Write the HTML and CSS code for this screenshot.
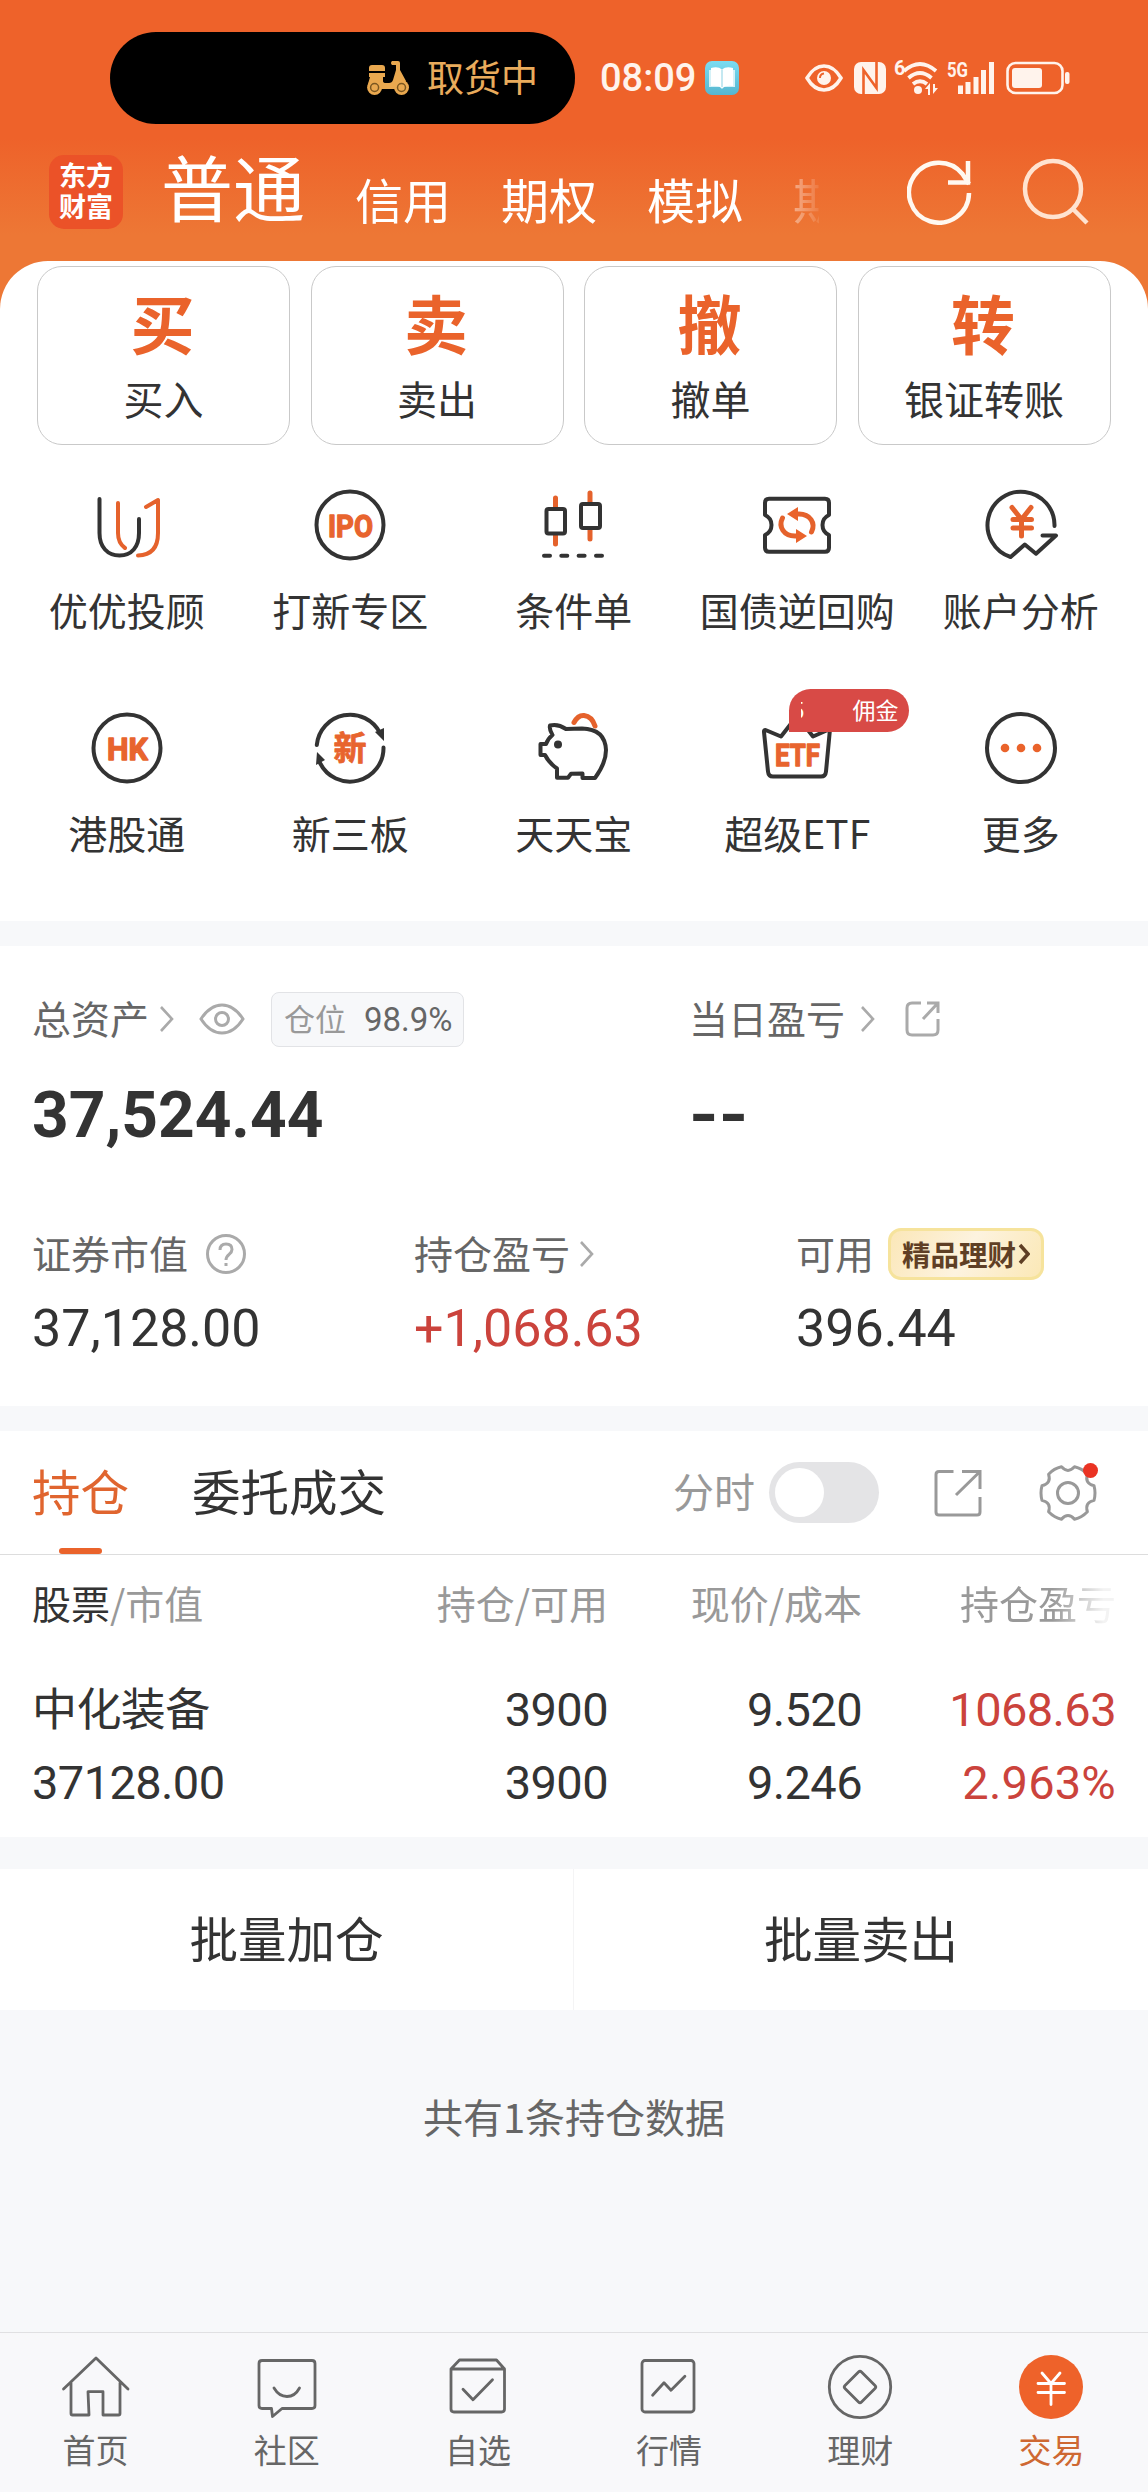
FILE: index.html
```html
<!DOCTYPE html>
<html lang="zh-CN">
<head>
<meta charset="utf-8">
<title>交易</title>
<link rel="stylesheet" href="styles.css">
</head>
<body>
<header class="top">
  <div class="status">
    <div class="pill">
      <svg width="44" height="36" viewBox="0 0 44 36"><g fill="#e9a84f"><path d="M3 11V8q0-3 3-3H16q3 0 3 3v3zM3 13H19V17H17v4q0 2 3 2h3q3 0 4-3l3-10V5H26q-1-1-1-2t1-2h6q2 0 2 2v7l6 11-4 8H8L2 24l2-7H3z"/><circle cx="8.600" cy="27.500" r="7.500"/><circle cx="35.500" cy="27.500" r="7.500"/></g><g fill="none" stroke="#7a5620" stroke-width="1.500"><circle cx="8.600" cy="27.500" r="4"/><circle cx="35.500" cy="27.500" r="4"/></g></svg>
      <span>取货中</span>
    </div>
    <span class="clock">08:09</span>
    <svg class="book" width="34" height="34" viewBox="0 0 34 34"><defs><linearGradient id="bk" x1="0" y1="0" x2="0" y2="1"><stop offset="0" stop-color="#7bdcf2"/><stop offset="1" stop-color="#55b6cf"/></linearGradient></defs><rect width="34" height="34" rx="7" fill="url(#bk)"/><path fill="#d5f1f7" d="M4 9h26v17H19l-2 2-2-2H4z"/><path fill="#fff" d="M6 7q7-2 11 1.500q4-3.500 11-1.500v18q-7-1-11 2-4-3-11-2z"/><path d="M17 8.500V26" stroke="#a5dcea" stroke-width="1.300"/></svg>
    <svg class="s-eye" width="38" height="28" viewBox="0 0 38 28"><path d="M2 14Q9 2 19 2t17 12Q29 26 19 26T2 14z" fill="none" stroke="#fff3ec" stroke-width="3.500"/><circle cx="19" cy="14" r="7" fill="#fff3ec"/><path d="M15 14q0-4 4-4.500" fill="none" stroke="#ee622a" stroke-width="2"/></svg>
    <svg class="s-nfc" width="32" height="34" viewBox="0 0 32 34"><rect y="1" width="32" height="32" rx="7" fill="#fff3ec"/><path d="M9.500 34V9L22.500 27V0" fill="none" stroke="#ee622a" stroke-width="2.600"/></svg>
    <svg class="s-wifi" width="44" height="36" viewBox="0 0 44 36"><text x="0" y="15" class="tiny">6</text><g fill="none" stroke="#fff3ec" stroke-width="3.800"><path d="M10 11Q26-3 42 11"/><path d="M14.500 18Q26 8 37.500 18"/><path d="M19 24q7-5.500 14 0"/></g><circle cx="24" cy="30" r="4" fill="#fff3ec"/><path fill="#fff3ec" d="M31 29l5-6v12h-2v-6zM44 28l-5 6V24h2v4z"/></svg>
    <svg class="s-cell" width="48" height="36" viewBox="0 0 48 36"><text x="0" y="17" class="tiny" textLength="21" lengthAdjust="spacingAndGlyphs">5G</text><path d="M13.500 34V25.500M21 34V22M29 34V17M36.500 34V10M44.500 34V2" stroke="#fff3ec" stroke-width="5"/></svg>
    <svg class="s-batt" width="64" height="34" viewBox="0 0 64 34"><rect x="1.500" y="2" width="55" height="30" rx="8" fill="none" stroke="#fff3ec" stroke-width="2.600"/><rect x="6" y="7" width="30" height="20" rx="3" fill="#fff3ec"/><rect x="59" y="11" width="4.500" height="12" rx="2" fill="#fff3ec"/></svg>
  </div>
  <div class="titlebar">
    <div class="logo"><span>东方</span><span>财富</span></div>
    <nav class="modes"><b>普通</b><span>信用</span><span>期权</span><span>模拟</span><span>期货</span></nav>
    <svg class="refresh" width="66" height="66" viewBox="0 0 66 66" fill="none" stroke="#fff8f0" stroke-width="4.500"><path d="M62 34A30 30 0 1 1 55.500 15L62 25"/><path d="M61 2V23.500H41"/></svg>
    <svg class="search" width="68" height="68" viewBox="0 0 68 68" fill="none" stroke="#ffe3d0" stroke-width="4.500"><circle cx="31" cy="31" r="28"/><path d="M51 51L65 65"/></svg>
  </div>
</header>

<main>
  <section class="panel">
    <div class="cards">
      <div class="card"><b>买</b><span>买入</span></div>
      <div class="card"><b>卖</b><span>卖出</span></div>
      <div class="card"><b>撤</b><span>撤单</span></div>
      <div class="card"><b>转</b><span>银证转账</span></div>
    </div>
    <div class="features">
      <div class="feature"><svg class="ico" viewBox="0 0 80 80"><path d="M12.500 14V48c0 14 8 22.500 20 22.500S52 62 52 48V34"/><path class="o" d="M31 18V48q0 10 7 15M59 22L71 15V48q0 22-20 22.500"/></svg><span>优优投顾</span></div>
      <div class="feature"><svg class="ico" viewBox="0 0 80 80"><circle cx="40" cy="40" r="33.500"/><text x="40.500" y="51.500" textLength="45" lengthAdjust="spacingAndGlyphs">IPO</text></svg><span>打新专区</span></div>
      <div class="feature"><svg class="ico" viewBox="0 0 80 80"><path class="o c" d="M21.500 13V22M21.500 50V59M56 8V17M56 44V54"/><rect x="12.500" y="24" width="18.500" height="24.500" rx="2"/><rect x="47" y="19" width="19" height="24" rx="2"/><path d="M10 70.700h6M27.300 70.700h6M44.600 70.700h6M62 70.700h6"/></svg><span>条件单</span></div>
      <div class="feature"><svg class="ico" viewBox="0 0 80 80"><path d="M12 13.700H68q4 0 4 4V30q-6.500 3-6.500 10T72 50V62.700q0 4-4 4H12q-4 0-4-4V50q6.500-3 6.500-10T8 30V17.700q0-4 4-4z"/><path class="o c" d="M39 29h3c11 0 17 9 12.500 18M41 51h-3C27 51 21 42 25.500 33"/><path class="f" d="M30 29l11-7v14zM50 51l-11-7v14z"/></svg><span>国债逆回购</span></div>
      <div class="feature"><svg class="ico" viewBox="0 0 80 80"><path d="M73.500 41A33.500 33.500 0 1 0 29.600 72L43.800 59.500 55 68.700 75 50.500H61.500"/><path class="o c" d="M31 22.500l9.500 12 9.500-12M32 34.500H50.500M32 43H50.500M40.500 34V51"/></svg><span>账户分析</span></div>
      <div class="feature"><svg class="ico" viewBox="0 0 80 80"><circle cx="40" cy="40" r="33.500"/><text x="40.500" y="51.500" textLength="41" lengthAdjust="spacingAndGlyphs">HK</text></svg><span>港股通</span></div>
      <div class="feature"><svg class="ico" viewBox="0 0 80 80"><path d="M6.800 37A33.500 33.500 0 0 1 70 25M73.500 39.500A33.500 33.500 0 0 1 10 55"/><path fill="#333" stroke="none" d="M65 24l9-4 0 13zM15 52l-8-8-1 13z"/><text x="40" y="52" class="cn">新</text></svg><span>新三板</span></div>
      <div class="feature"><svg class="ico" viewBox="0 0 80 80"><path d="M16 17.500q-1 4 2.500 9.500-4.500 3.500-6.500 9H6.500V47H11q4 8 12 13.500v9.200H34L37 65.800 48.500 65.500V70H61Q72 55 72 42 71 21 48 20.500L32 21Q24 15.500 16 17.500z"/><circle cx="24" cy="36.500" r="4" fill="#333" stroke="none"/><path class="o c" d="M40 14.500q4-7.500 10-7 8 1 11 10.500"/></svg><span>天天宝</span></div>
      <div class="feature"><svg class="ico" viewBox="0 0 80 80"><path d="M8.500 22L24 28.500 40 8 56 28.500 73 21 69 63.500q-.5 5-5 5H16q-4.500 0-5-5L7 24q-.2-2 1.500-2z"/><text x="40.500" y="57.500" textLength="45" lengthAdjust="spacingAndGlyphs">ETF</text></svg><span>超级ETF</span><div class="badge"><i>5</i><em>佣金</em></div></div>
      <div class="feature"><svg class="ico" viewBox="0 0 80 80"><circle cx="40" cy="40" r="34"/><g class="f"><circle cx="24" cy="40" r="4.300"/><circle cx="40" cy="40" r="4.300"/><circle cx="56" cy="40" r="4.300"/></g></svg><span>更多</span></div>
    </div>
  </section>

  <section class="assets">
    <div class="row two">
      <div class="cell">总资产<svg class="chev c1" viewBox="0 0 16 28"><path d="M2 2l11 12L2 26"/></svg>
        <svg class="eye" viewBox="0 0 46 32"><path d="M2 16Q11 2 23 2t21 14Q35 30 23 30T2 16z"/><circle cx="23" cy="16" r="6.500"/></svg>
        <span class="ratio">仓位<b>98.9%</b></span></div>
      <div class="cell">当日盈亏<svg class="chev c2" viewBox="0 0 16 28"><path d="M2 2l11 12L2 26"/></svg>
        <svg class="share" viewBox="0 0 36 36"><path d="M16 2H7Q2 2 2 7V29q0 5 5 5H28q5 0 5-5V18M22 2H33V12M32 3L18 18"/></svg></div>
    </div>
    <div class="row two big"><span>37,524.44</span><span class="none">--</span></div>
    <div class="row three labels">
      <div class="cell">证券市值<svg class="help" viewBox="0 0 40 40"><circle cx="20" cy="20" r="18.500"/><path d="M14 16q0-6 6-6t6 5.500c0 5-6 5-6 10.500M20 29v3"/></svg></div>
      <div class="cell">持仓盈亏<svg class="chev c3" viewBox="0 0 16 28"><path d="M2 2l11 12L2 26"/></svg></div>
      <div class="cell">可用<span class="gold">精品理财<svg viewBox="0 0 12 22" width="12" height="22"><path d="M2 2l8 9-8 9" fill="none" stroke="#5f3f25" stroke-width="3.500"/></svg></span></div>
    </div>
    <div class="row three values"><span>37,128.00</span><span class="red">+1,068.63</span><span>396.44</span></div>
  </section>

  <section class="holdings">
    <div class="tabs">
      <span class="tab on">持仓</span><span class="tab">委托成交</span>
      <span class="fs">分时</span><span class="toggle"></span>
      <svg class="open" width="48" height="48" viewBox="0 0 48 48" fill="none" stroke="#999" stroke-width="3"><path d="M19.500 2.500H5q-3 0-3 3V43q0 3 3 3H43q3 0 3-3V28M28 2.500H46V20M46 2.500L22 26"/></svg>
      <div class="gear"><svg width="60" height="60" viewBox="0 0 60 60" fill="none" stroke="#999" stroke-width="3" stroke-linejoin="round"><path d="M56 22.600Q58 30 56 37.400Q46.500 39.500 49.400 48.800Q44 54.500 36.500 56.200Q30 49 23.500 56.200Q16 54.500 10.600 48.800Q13.500 39.500 4 37.400Q2 30 4 22.600Q13.500 20.500 10.600 11.200Q16 5.500 23.500 3.800Q30 11 36.500 3.800Q44 5.500 49.400 11.200Q46.500 20.500 56 22.600z"/><circle cx="30" cy="30" r="10.500"/></svg></div>
    </div>
    <div class="table thead"><span><b>股票</b>/市值</span><span>持仓/可用</span><span>现价/成本</span><span class="fade">持仓盈亏</span></div>
    <div class="table line1"><span class="name">中化装备</span><span>3900</span><span>9.520</span><span class="red">1068.63</span></div>
    <div class="table line2"><span>37128.00</span><span>3900</span><span>9.246</span><span class="red pct">2.963%</span></div>
  </section>

  <section class="batch"><span>批量加仓</span><span>批量卖出</span></section>
  <p class="count">共有1条持仓数据</p>
</main>

<footer class="nav">
  <div class="item"><svg viewBox="0 0 70 70"><path d="M2.500 37L35 6 67 37M10 31V61.500q0 1.500 1.500 1.500H28L27 39.700H42V63H57.500q1.500 0 1.500-1.500V31"/></svg><span>首页</span></div>
  <div class="item"><svg viewBox="0 0 70 70"><path d="M10 8.500H60q3 0 3 3V53.500q0 3-3 3H30L20.500 64.500 19.500 56.500H10q-3 0-3-3V11.500q0-3 3-3z"/><path d="M22 36q5 8.500 13 8.500T47.500 36"/></svg><span>社区</span></div>
  <div class="item"><svg viewBox="0 0 70 70"><path d="M8 17L16.500 8H53.500L61.500 17V57q0 3-3 3H11q-3 0-3-3zM8 17H61.500M20 37.300L30 47.700 49.500 27.700"/></svg><span>自选</span></div>
  <div class="item"><svg viewBox="0 0 70 70"><rect x="8" y="8.500" width="52" height="51.500" rx="3"/><path d="M18.600 43.300L30 30.700 37 38.300 50.900 24.300"/></svg><span>行情</span></div>
  <div class="item"><svg viewBox="0 0 70 70"><circle cx="35" cy="35" r="30.700"/><path d="M33.500 20q1.500-1.500 3 0L50 33.500q1.500 1.500 0 3L36.500 50q-1.500 1.500-3 0L20 36.500q-1.500-1.500 0-3z"/></svg><span>理财</span></div>
  <div class="item on"><svg viewBox="0 0 70 70"><circle cx="35" cy="35" r="32" fill="#ee622a" stroke="none"/><path stroke="#fff" d="M26 21L35 31.500 44 21M22 31.500H48.500M22 40.500H48.500M35 31V52.500"/></svg><span>交易</span></div>
</footer>
</body>
</html>
```

FILE: styles.css
```css
* { box-sizing: border-box; }
body {
  margin: 0;
  width: 1148px;
  height: 2492px;
  overflow: hidden;
  display: flex;
  flex-direction: column;
  background: #f7f8fa;
  color: #333;
  font: 39px/56px "Noto Sans CJK SC", sans-serif;
}
svg { flex: none; display: block; }
b, em, i { font-weight: inherit; font-style: normal; }
span { white-space: nowrap; }

/* Header */
.top {
  height: 310px;
  flex: none;
  background: linear-gradient(#ee622a 0, #ee622a 138px, #ed7735 235px);
}
.status {
  height: 124px;
  padding: 32px 0 0 110px;
  display: flex;
  align-items: center;
}
.pill {
  width: 465px;
  height: 92px;
  border-radius: 46px;
  background: #000;
  color: #e9ab5c;
  display: flex;
  align-items: center;
  padding-left: 256px;
  gap: 17px;
  font-size: 37px;
}
.pill span { padding-bottom: 4px; }
.clock {
  width: 104px;
  margin-left: 25px;
  color: #fff3ec;
  font: 500 38px/92px Roboto, sans-serif;
}
.book { margin-left: 1px; }
.s-eye { margin-left: 66px; }
.s-nfc { margin-left: 11px; }
.s-wifi { margin-left: 8px; }
.s-cell { margin-left: 9px; }
.s-batt { margin-left: 11px; }
.tiny { font: 700 20px Roboto, sans-serif; fill: #fff3ec; }
.titlebar {
  height: 137px;
  display: flex;
  padding-left: 49px;
  color: #fff;
}
.logo {
  width: 74px;
  height: 74px;
  margin-top: 31px;
  padding-bottom: 4px;
  border-radius: 15px;
  background: #eb5228;
  display: flex;
  flex-direction: column;
  align-items: center;
  justify-content: center;
  font-size: 27px;
  font-weight: 700;
  line-height: 31px;
}
.modes {
  width: 659px;
  padding-left: 1px;
  margin-left: 37px;
  display: flex;
  gap: 50px;
  overflow: hidden;
  font-size: 48px;
  line-height: 70px;
  -webkit-mask-image: linear-gradient(90deg, #000 580px, rgba(0,0,0,.4) 635px, rgba(0,0,0,.1) 658px);
  mask-image: linear-gradient(90deg, #000 580px, rgba(0,0,0,.4) 635px, rgba(0,0,0,.1) 658px);
}
.modes > * { flex: none; white-space: nowrap; margin-top: 39px; }
.modes b { font-size: 72px; line-height: 104px; margin-top: 9px; }
.refresh { margin: 35px 0 0 88px; }
.search { margin: 34px 0 0 49px; }

/* Quick actions */
.panel {
  height: 660px;
  margin-top: -49px;
  padding: 5px 37px 0;
  background: #fff;
  border-radius: 48px 48px 0 0;
}
main { display: contents; }
section { flex: none; }
.cards { display: grid; grid-template-columns: repeat(4, 253px); gap: 20.500px; }
.card {
  height: 179px;
  border: 1px solid #c9c9c9;
  border-radius: 25px;
  display: flex;
  flex-direction: column;
  align-items: center;
  font-size: 40px;
}
.card b { color: #ea632b; font-size: 64px; font-weight: 700; line-height: 94px; margin: 7px 2px 0 0; }
.card span { margin-top: 2px; }
.features {
  display: grid;
  grid-template-columns: repeat(5, 223.5px);
  grid-auto-rows: 223px;
  margin: 40px 0 0 -22px;
}
.feature { position: relative; display: flex; flex-direction: column; align-items: center; }
.feature > span { margin-top: 16px; }
.ico { width: 80px; height: 80px; fill: none; stroke: #333; stroke-width: 4; stroke-linecap: round; stroke-linejoin: round; }
.ico .o { stroke: #e5622c; }
.ico .c { stroke-width: 5; }
.ico .f { fill: #ea632b; stroke: none; }
.ico text { font: 700 31px Roboto, sans-serif; fill: #e8642e; stroke: #e8642e; stroke-width: 1.3; text-anchor: middle; }
.ico text.cn { font: 700 33px "Noto Sans CJK SC", sans-serif; stroke-width: .8; }
.badge {
  position: absolute;
  left: 103px;
  top: -19px;
  width: 120px;
  height: 43px;
  padding: 0 10px 0 12px;
  display: flex;
  justify-content: space-between;
  background: #d84a46;
  border-radius: 22px 22px 22px 0;
  color: #fff;
  font-size: 23px;
  line-height: 41px;
}
.badge i { width: 4px; overflow: hidden; display: flex; justify-content: flex-end; }

/* Assets */
.assets { height: 460px; margin-top: 25px; padding: 45px 0 0 32px; background: #fff; color: #666; }
.row { display: grid; align-items: center; }
.two { grid-template-columns: 657px 1fr; height: 57px; }
.three { grid-template-columns: 382px 382px 1fr; }
.cell { display: flex; align-items: center; height: 57px; padding-bottom: 4px; }
.cell > * { margin-top: 4px; }
.two .cell { padding-bottom: 6px; }
.two .cell > * { margin-top: 5px; }
.cell svg { fill: none; stroke: #aaa; stroke-width: 3; }
.cell .chev { width: 16px; height: 28px; stroke-width: 2.6; }
.c1 { margin-left: 10px; }
.c2 { margin-left: 15px; }
.c3 { margin-left: 9px; }
.cell .eye { width: 46px; height: 32px; margin-left: 24px; }
.cell .share { width: 36px; height: 36px; margin-left: 29px; }
.cell .help { width: 40px; height: 40px; margin-left: 18px; }
.ratio {
  margin-left: 26px;
  width: 193px;
  height: 55px;
  padding-left: 12px;
  border: 1px solid #e2e3e6;
  border-radius: 8px;
  background: #f7f8fa;
  color: #999;
  font-size: 31px;
  line-height: 49px;
  display: flex;
}
.ratio b { margin-left: 18px; color: #666; font: 33px/53px Roboto, sans-serif; }
.big { height: 80px; margin-top: 28px; color: #333; font: 700 64px/80px Roboto, sans-serif; }
.none { justify-self: start; transform: scaleX(1.18); transform-origin: left; }
.labels { height: 57px; margin-top: 69px; }
.gold {
  margin-left: 14px;
  width: 156px;
  height: 52px;
  padding-left: 11px;
  border: 3px solid #f6e39c;
  border-radius: 13px;
  background: linear-gradient(120deg, #fbe7b8, #fdf3df 50%, #fbe8b6);
  color: #5f3f25;
  font-size: 28.5px;
  font-weight: 700;
  line-height: 43px;
  display: flex;
  align-items: center;
}
.gold svg { margin-left: 2px; }
.values { height: 60px; margin-top: 17px; color: #333; font: 52px/60px Roboto, sans-serif; }
.values .red, .red { color: #cb433c; }

/* Holdings */
.holdings { height: 406px; margin-top: 25px; background: #fff; }
.tabs { height: 124px; padding-left: 32px; border-bottom: 1px solid #ddd; display: flex; align-items: center; }
.tab { font-size: 48.5px; line-height: 118px; height: 123px; margin-right: 63px; position: relative; }
.tab.on { color: #e0652f; }
.tab.on::after { content: ""; position: absolute; left: 27px; bottom: 0; width: 43px; height: 6px; border-radius: 3px; background: #ea632b; }
.fs { margin-left: 224px; color: #999; font-size: 41px; padding-bottom: 5px; }
.toggle { width: 110px; height: 61px; margin-left: 14px; border-radius: 31px; background: #e4e4e6; padding: 6px; display: flex; }
.toggle::before { content: ""; width: 49px; height: 49px; border-radius: 50%; background: #fff; }
.open { margin-left: 55px; }
.gear { margin-left: 56px; position: relative; }
.gear::after { content: ""; position: absolute; left: 45px; top: 0; width: 15px; height: 15px; border-radius: 50%; background: #ea3323; }
.table { display: grid; grid-template-columns: 275px 301px 254px 254px; padding-left: 32px; text-align: right; }
.table > :first-child { text-align: left; }
.thead { height: 56px; margin-top: 19px; color: #999; }
.thead b { color: #333; }
.fade { -webkit-mask-image: linear-gradient(90deg, #000 75%, rgba(0,0,0,.12) 95%); mask-image: linear-gradient(90deg, #000 75%, rgba(0,0,0,.12) 95%); }
.line1, .line2 { height: 73px; font: 47px/73px Roboto, sans-serif; letter-spacing: -.6px; }
.line1 { margin-top: 43px; }
.line1 .name { font: 45px/68px "Noto Sans CJK SC", sans-serif; }
.pct { letter-spacing: .2px; }

.batch { height: 141px; margin-top: 32px; background: #fff; display: grid; grid-template-columns: 1fr 1fr; text-align: center; font-size: 48.500px; line-height: 136px; }
.batch span:first-child { border-right: 1px solid #f4f4f5; }
.count { margin: 78px 0 0; height: 56px; text-align: center; color: #666; font-size: 40px; }

/* Bottom navigation */
.nav { margin-top: auto; height: 160px; padding-right: 1px; border-top: 1px solid #e0e0e2; background: #f8f8fa; display: grid; grid-template-columns: repeat(6, 1fr); color: #666; font-size: 33px; line-height: 48px; }
.item { display: flex; flex-direction: column; align-items: center; padding-top: 19px; }
.item svg { width: 70px; height: 70px; fill: none; stroke: #666; stroke-width: 2.8; stroke-linecap: round; stroke-linejoin: round; }
.item span { margin-top: 3px; }
.item.on { color: #ce6832; }
```
